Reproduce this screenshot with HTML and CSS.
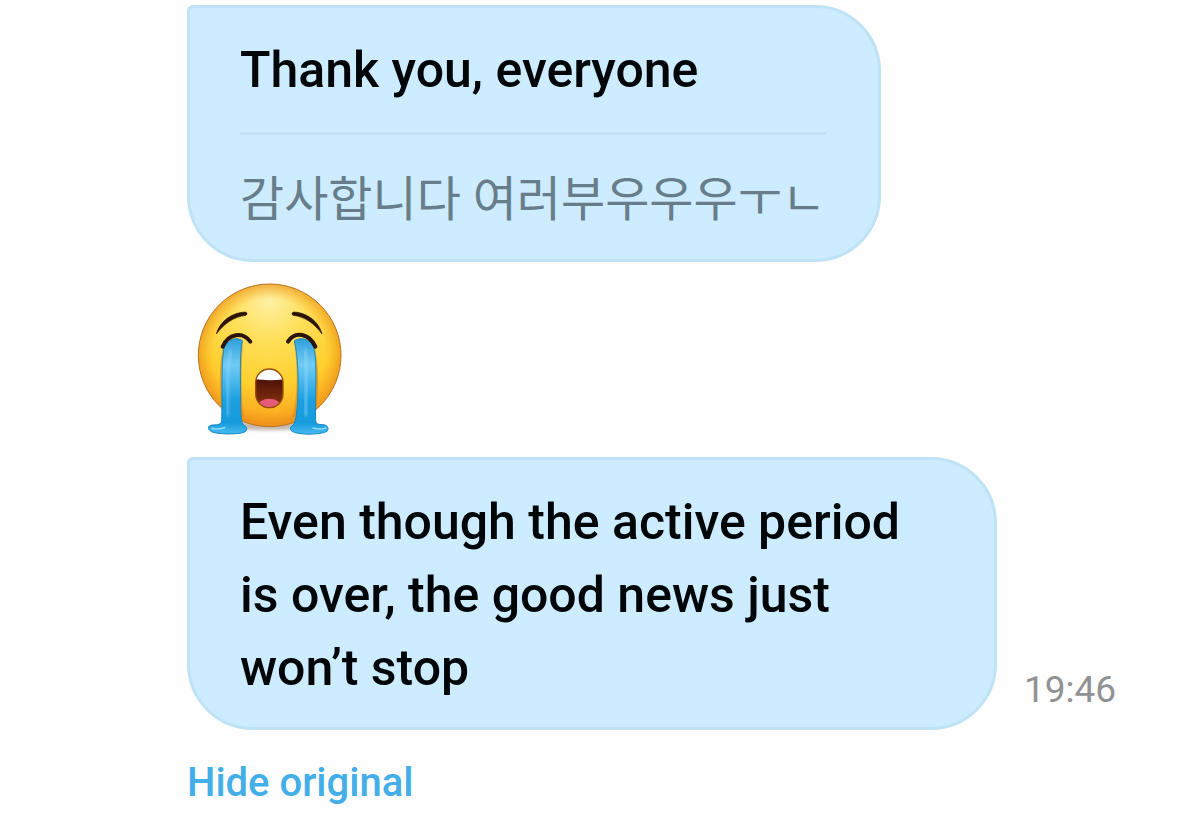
FILE: index.html
```
<!DOCTYPE html>
<html lang="en">
<head>
  <meta charset="UTF-8">
  <meta name="viewport" content="width=device-width, initial-scale=1">
  <title>Messages</title>
  <link rel="stylesheet" href="styles.css">
</head>
<body>

  <main class="chat">
    <div class="bubble">
      <p class="translated">Thank you, everyone</p>
      <hr class="divider">
      <p class="original" lang="ko">감사합니다 여러부우우우ㅜㄴ</p>
    </div>

    <svg class="emoji" viewBox="42 36 450 468" role="img" aria-label="Loudly crying face">
      <defs>
        <radialGradient id="face" cx="268" cy="95" r="385" gradientUnits="userSpaceOnUse">
          <stop offset="0" stop-color="#fff0a4"/>
          <stop offset=".3" stop-color="#ffdf59"/>
          <stop offset=".65" stop-color="#ffd02f"/>
          <stop offset=".88" stop-color="#fbac20"/>
          <stop offset="1" stop-color="#ee8317"/>
        </radialGradient>
        <radialGradient id="rim" cx="269" cy="256" r="216" gradientUnits="userSpaceOnUse">
          <stop offset=".78" stop-color="#f5a31b" stop-opacity="0"/>
          <stop offset="1" stop-color="#e8901c" stop-opacity=".7"/>
        </radialGradient>
        <linearGradient id="tear" x1="0" y1="205" x2="0" y2="492" gradientUnits="userSpaceOnUse">
          <stop offset="0" stop-color="#2f9fdc"/>
          <stop offset=".28" stop-color="#70cbf5"/>
          <stop offset=".65" stop-color="#1b9fe0"/>
          <stop offset=".88" stop-color="#169bdc"/>
          <stop offset="1" stop-color="#48baf0"/>
        </linearGradient>
        <linearGradient id="mouth" x1="0" y1="325" x2="0" y2="412" gradientUnits="userSpaceOnUse">
          <stop offset="0" stop-color="#4b1007"/>
          <stop offset="1" stop-color="#8c3511"/>
        </linearGradient>
        <clipPath id="mouthShape">
          <rect x="227" y="297" width="82" height="116" rx="41"/>
        </clipPath>
        <filter id="soft" x="-20%" y="-100%" width="140%" height="300%">
          <feGaussianBlur stdDeviation="5"/>
        </filter>
      </defs>

      <ellipse cx="269" cy="467" rx="125" ry="14" fill="#8b7768" opacity=".5" filter="url(#soft)"/>
      <circle cx="269" cy="256" r="214" fill="url(#face)"/>
      <circle cx="269" cy="256" r="214" fill="url(#rim)" stroke="#b87525" stroke-width="3"/>

      <!-- brows -->
      <path d="M109 192C120 153 156 127 197 126Q205 131 198 136C160 141 134 160 109 192Z" fill="#2b1405" stroke="#2b1405" stroke-width="2"/>
      <path d="M426 192C416 153 380 127 340 126Q332 131 339 136C377 141 402 160 426 192Z" fill="#2b1405" stroke="#2b1405" stroke-width="2"/>

      <!-- tears -->
      <g fill="none" stroke="#c97b12" stroke-width="8" opacity=".45">
        <path d="M133 236C119 280 124 338 127 415M185 212C181 280 177 370 187 440"/>
        <path d="M345 212C357 280 358 370 342 440M400 236C414 280 412 350 406 415"/>
      </g>
      <path d="M133 230C146 207 170 200 187 212C178 256 182 332 182 390C182 435 183 461 193 466Q206 475 196 485C178 495 110 493 94 485Q80 475 88 468C98 461 124 471 125 451C128 388 122 279 133 230Z" fill="url(#tear)" stroke="#168ac5" stroke-width="3"/>
      <path d="M343 212C364 200 389 207 401 230C414 280 404 388 407 451C408 470 426 460 437 466Q449 473 441 484C422 495 357 495 338 485Q325 477 336 468C347 461 350 435 353 390C356 332 354 256 343 212Z" fill="url(#tear)" stroke="#168ac5" stroke-width="3"/>
      <path d="M153 239C137 299 144 377 142 438" fill="none" stroke="#a7e1fb" stroke-width="9" opacity=".4" filter="url(#soft)"/>
      <path d="M374 239C388 299 373 377 378 438" fill="none" stroke="#a7e1fb" stroke-width="12" opacity=".4" filter="url(#soft)"/>
      <path d="M96 475Q112 480 134 473M438 474Q421 480 399 474" fill="none" stroke="#8bd8fa" stroke-width="5" stroke-linecap="round"/>

      <!-- closed eyes -->
      <path d="M128 230C145 190 188 183 211 215" fill="none" stroke="#2b1405" stroke-width="12" stroke-linecap="round"/>
      <path d="M324 215C345 182 388 190 406 230" fill="none" stroke="#2b1405" stroke-width="12" stroke-linecap="round"/>

      <!-- mouth -->
      <g clip-path="url(#mouthShape)">
        <rect x="224" y="294" width="90" height="122" fill="url(#mouth)"/>
        <path d="M224 294H314V328Q268 333 224 328Z" fill="#fff"/>
        <ellipse cx="268" cy="411" rx="35" ry="25" fill="#e65b78"/>
      </g>
      <rect x="227" y="297" width="82" height="116" rx="41" fill="none" stroke="#9a4e0b" stroke-width="4"/>
    </svg>

    <div class="message-row">
      <div class="bubble">
        <p class="translated">Even though the active period is over, the good news just won’t stop</p>
      </div>
      <time class="time" datetime="19:46">19:46</time>
    </div>

    <button class="toggle" type="button">Hide original</button>
  </main>

</body>
</html>
```

FILE: styles.css
```
* {
  box-sizing: border-box;
}

body {
  margin: 0;
  background-color: #fefefe;
  font-family: Roboto, "Noto Sans CJK KR", sans-serif;
}

.chat {
  display: flex;
  flex-direction: column;
  align-items: flex-start;
  padding: 5px 40px 20px 187px;
}

.bubble {
  max-width: 810px;
  padding: 26px 52px 22px 50px;
  background-color: #cdecff;
  border: 3px solid #bfe3f5;
  border-radius: 6px 66px 66px 66px;
}

.bubble p {
  margin: 0;
}

.translated {
  font-size: 50px;
  font-weight: 500;
  line-height: 73px;
  color: #000508;
}

.divider {
  height: 3px;
  margin: 25px 0 28px;
  border: none;
  background-color: #c1e2f4;
}

.original {
  font-size: 48px;
  line-height: 74px;
  color: #687d8a;
}

.emoji {
  width: 150px;
  height: 156px;
  margin: 20px 7px 19px;
}

.message-row {
  display: flex;
  align-items: flex-end;
  gap: 27px;
}

.time {
  margin-bottom: 18px;
  font-size: 37px;
  line-height: 44px;
  color: #929292;
}

.toggle {
  margin-top: 28px;
  padding: 0;
  border: none;
  background: none;
  font-family: inherit;
  font-size: 40px;
  font-weight: 500;
  line-height: 50px;
  color: #43aee8;
  cursor: pointer;
}
```
